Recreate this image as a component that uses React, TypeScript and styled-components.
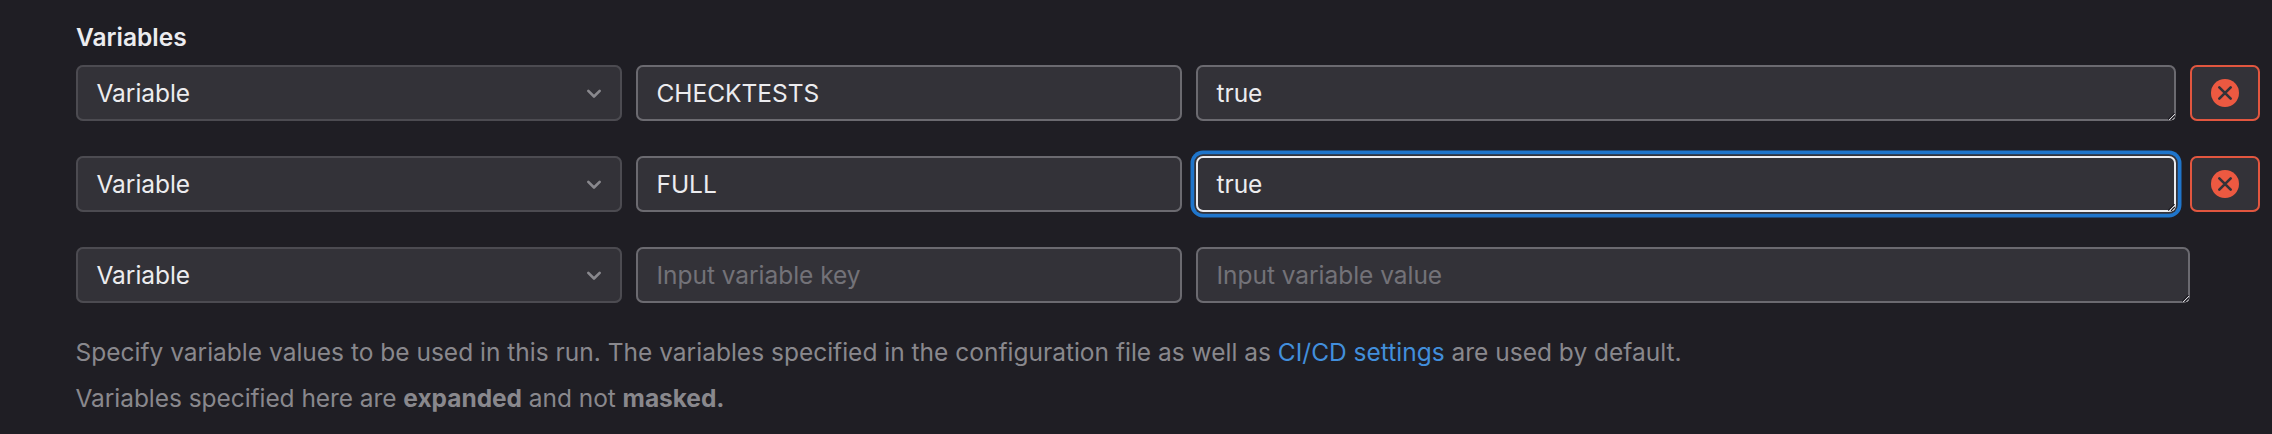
import React from "react";
import styled, { createGlobalStyle } from "styled-components";

const GlobalStyle = createGlobalStyle`
  * { box-sizing: border-box; }
  body {
    margin: 0;
    background: #1f1e24;
    color: #ececef;
    font-family: Inter, "Liberation Sans", sans-serif;
    font-size: 24.5px;
  }
`;

const Page = styled.main`
  min-height: 434px;
  padding: 20px 12px 0 76px;
  background: #1f1e24;
`;

const Heading = styled.div`
  height: 45px;
  line-height: 35px;
  font-weight: 600;
`;

const Rows = styled.div`
  display: flex;
  flex-direction: column;
  gap: 35px;
`;

const Row = styled.div`
  display: flex;
  gap: 14px;
  height: 56px;
`;

const Field = styled.div<{ $grow?: boolean; $muted?: boolean; $focus?: boolean; $endGap?: boolean }>`
  position: relative;
  display: flex;
  align-items: center;
  justify-content: space-between;
  flex: ${(p) => (p.$grow ? "1 1 0" : "0 0 546px")};
  margin-right: ${(p) => (p.$endGap ? "70px" : "0")};
  padding: 0 21px 0 20.5px;
  border-radius: 7px;
  background: #333238;
  box-shadow: inset 0 0 0 2px
      ${(p) => (p.$focus ? "#ececef" : p.$muted ? "#4c4b51" : "#6b6a70")}
    ${(p) => (p.$focus ? ", 0 0 0 1.75px #333238, 0 0 0 5.5px #1f75cb" : "")};
`;

const Value = styled.span<{ $placeholder?: boolean }>`
  line-height: 28px;
  letter-spacing: -0.04px;
  white-space: nowrap;
  color: ${(p) => (p.$placeholder ? "#737278" : "#ececef")};
`;

const Chevron = styled.svg`
  width: 28px;
  height: 28px;
  margin-right: -7px;
`;

const Grip = styled.svg`
  position: absolute;
  right: 1px;
  bottom: 1px;
  width: 7px;
  height: 7px;
`;

const RemoveButton = styled.button`
  display: flex;
  align-items: center;
  justify-content: center;
  flex: 0 0 70px;
  padding: 0;
  border: 0;
  border-radius: 7px;
  background: #333238;
  box-shadow: inset 0 0 0 2px #e2563f;
`;

const Help = styled.div`
  margin: 32px 0 0 -0.5px;
  line-height: 35px;
  color: #89888d;
`;

const HelpLine = styled.p<{ $tight?: boolean }>`
  margin: 0 0 11px;
  letter-spacing: ${(p) => (p.$tight ? "-0.06px" : "0")};
  white-space: nowrap;

  strong {
    font-weight: 700;
    letter-spacing: -0.04px;
  }
`;

const Link = styled.a`
  color: #428fdc;
`;

type Variable = { name?: string; value?: string; focused?: boolean };

const variables: Variable[] = [
  { name: "CHECKTESTS", value: "true" },
  { name: "FULL", value: "true", focused: true },
  {},
];

function ResizeGrip() {
  return (
    <Grip viewBox="0 0 7 7">
      <path d="M0 6.5L6.5 0M3 7L7 3" stroke="#1f1e24" strokeWidth="1.2" />
      <path d="M1 7L7 1M4.5 7L7 4.5" stroke="#d8d7dc" strokeWidth="1" />
    </Grip>
  );
}

function VariableRow({ name, value, focused }: Variable) {
  const removable = name !== undefined;
  return (
    <Row>
      <Field $muted>
        <Value>Variable</Value>
        <Chevron viewBox="0 0 16 16" fill="none">
          <path
            d="M4.75 6.75L8 10l3.25-3.25"
            stroke="#89888d"
            strokeWidth="1.5"
            strokeLinecap="round"
            strokeLinejoin="round"
          />
        </Chevron>
      </Field>
      <Field>
        <Value $placeholder={!name}>{name ?? "Input variable key"}</Value>
      </Field>
      <Field $grow $focus={focused} $endGap={!removable}>
        <Value $placeholder={!value}>{value ?? "Input variable value"}</Value>
        <ResizeGrip />
      </Field>
      {removable && (
        <RemoveButton aria-label="Remove variable">
          <svg width="28" height="28" viewBox="0 0 16 16" fill="none">
            <circle cx="8" cy="8" r="8" fill="#ec5941" />
            <path
              d="M4.75 4.75l6.5 6.5M11.25 4.75l-6.5 6.5"
              stroke="#333238"
              strokeWidth="1.5"
              strokeLinecap="round"
            />
          </svg>
        </RemoveButton>
      )}
    </Row>
  );
}

export default function App() {
  return (
    <>
      <GlobalStyle />
      <Page>
        <Heading>Variables</Heading>
        <Rows>
          {variables.map((v, i) => (
            <VariableRow key={i} {...v} />
          ))}
        </Rows>
        <Help>
          <HelpLine>
            Specify variable values to be used in this run. The variables specified in the
            configuration file as well as <Link>CI/CD settings</Link> are used by default.
          </HelpLine>
          <HelpLine $tight>
            Variables specified here are <strong>expanded</strong> and not{" "}
            <strong>masked.</strong>
          </HelpLine>
        </Help>
      </Page>
    </>
  );
}
